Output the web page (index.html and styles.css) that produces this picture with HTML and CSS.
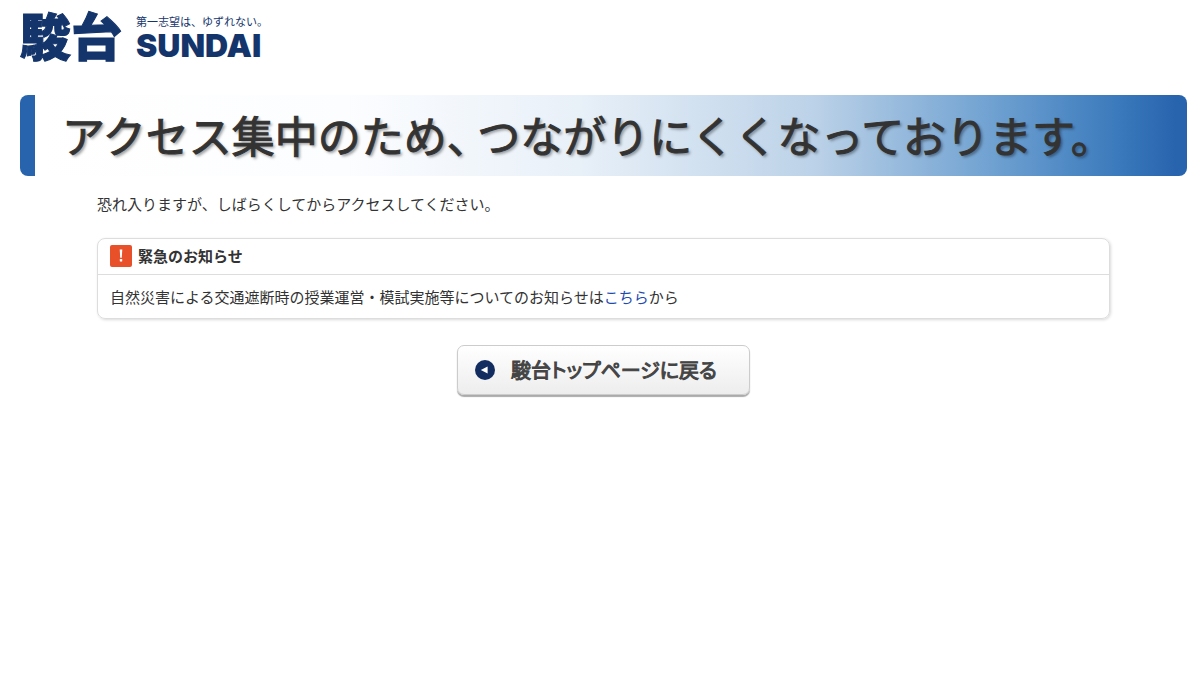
FILE: index.html
```html
<!DOCTYPE html>
<html lang="ja">
<head>
<meta charset="utf-8">
<meta name="viewport" content="width=device-width, initial-scale=1">
<title>駿台</title>
<link rel="stylesheet" href="styles.css">
</head>
<body>
<header class="logo">
  <span class="logo-kanji">駿台</span>
  <span class="logo-side">
    <span class="logo-tagline">第一志望は、ゆずれない。</span>
    <span class="logo-latin">SUNDAI</span>
  </span>
</header>
<main>
  <h1 class="banner">アクセス集中のため<span class="banner-comma">、</span>つながりにくくなっております。</h1>
  <div class="content">
    <p class="lead">恐れ入りますが、しばらくしてからアクセスしてください。</p>
    <section class="notice">
      <h2 class="notice-title">
        <svg class="notice-icon" viewBox="0 0 22 22" aria-hidden="true">
          <rect width="22" height="22" rx="2" fill="#e8502a"/>
          <path d="M9.7 4.5h2.6l-.5 8.3h-1.6z" fill="#fff"/>
          <rect x="9.8" y="14" width="2.4" height="2.6" rx=".6" fill="#fff"/>
        </svg>
        緊急のお知らせ
      </h2>
      <p class="notice-body">自然災害による交通遮断時の授業運営・模試実施等についてのお知らせは<a href="#">こちら</a>から</p>
    </section>
    <a class="back" href="#">
      <svg class="back-icon" viewBox="0 0 20 20" aria-hidden="true">
        <circle cx="10" cy="10" r="10" fill="#142d60"/>
        <path d="M5.8 10 12.6 6.4v7.2z" fill="#fff"/>
      </svg>
      駿台トップページに戻る
    </a>
  </div>
</main>
</body>
</html>
```
FILE: styles.css
```css
* {
  box-sizing: border-box;
}

body {
  margin: 0;
  padding: 10px 13px 24px 20px;
  background: #fff;
  color: #333;
  font-family: "Noto Sans CJK JP", sans-serif;
  font-size: 15px;
  line-height: 24px;
}

h1, h2, p {
  margin: 0;
}

.logo {
  display: flex;
  align-items: flex-start;
  gap: 14px;
  color: #14356b;
  white-space: nowrap;
}

.logo-kanji {
  font-size: 51px;
  font-weight: 900;
  line-height: 48px;
  -webkit-text-stroke: 1px #14356b;
}

.logo-side {
  display: flex;
  flex-direction: column;
  padding-top: 3px;
}

.logo-tagline {
  font-size: 11px;
  line-height: 16px;
}

.logo-latin {
  font-family: Inter, "Liberation Sans", sans-serif;
  font-size: 32px;
  font-weight: 900;
  line-height: 34px;
}

.banner {
  margin-top: 32px;
  padding: 7px 16px 10px 42px;
  border-radius: 8px;
  background: linear-gradient(to right, #2864ae 15px, #fff 15px, #fcfdff 28%, #e8f0f8 48%, #bcd2e8 68%, #6c9fd0 84%, #3b7abc 94%, #2864ae 99%);
  color: #333;
  font-size: 43px;
  font-weight: 400;
  line-height: 64px;
  -webkit-text-stroke: 1px #333;
  text-shadow: 2px 2px 3px rgba(0, 0, 0, 0.4);
}

.banner-comma {
  margin-right: 9px;
  font-feature-settings: "halt";
}

.content {
  padding: 16px 77px 0;
}

.notice {
  margin-top: 22px;
  border: 1px solid #ddd;
  border-radius: 8px;
  box-shadow: 1px 1px 3px rgba(0, 0, 0, 0.15);
}

.notice-title {
  display: flex;
  align-items: center;
  gap: 6px;
  padding: 5px 12px 6px;
  border-bottom: 1px solid #ddd;
  font-size: 15px;
  font-weight: 700;
}

.notice-icon {
  width: 22px;
  height: 22px;
}

.notice-body {
  padding: 10px 12px 9px;
}

.notice-body a {
  color: #1e4bb0;
  text-decoration: none;
}

.back {
  display: flex;
  align-items: center;
  gap: 16px;
  width: fit-content;
  margin: 26px auto 0;
  padding: 10px 32px 10px 17px;
  border: 1px solid #ccc;
  border-radius: 7px;
  background: linear-gradient(#fff, #ededed);
  box-shadow: 0 2px 1px #aaa;
  color: #444;
  font-size: 20px;
  font-weight: 400;
  font-feature-settings: "palt";
  line-height: 28px;
  -webkit-text-stroke: 1px #444;
  text-decoration: none;
}

.back-icon {
  width: 20px;
  height: 20px;
}
```
